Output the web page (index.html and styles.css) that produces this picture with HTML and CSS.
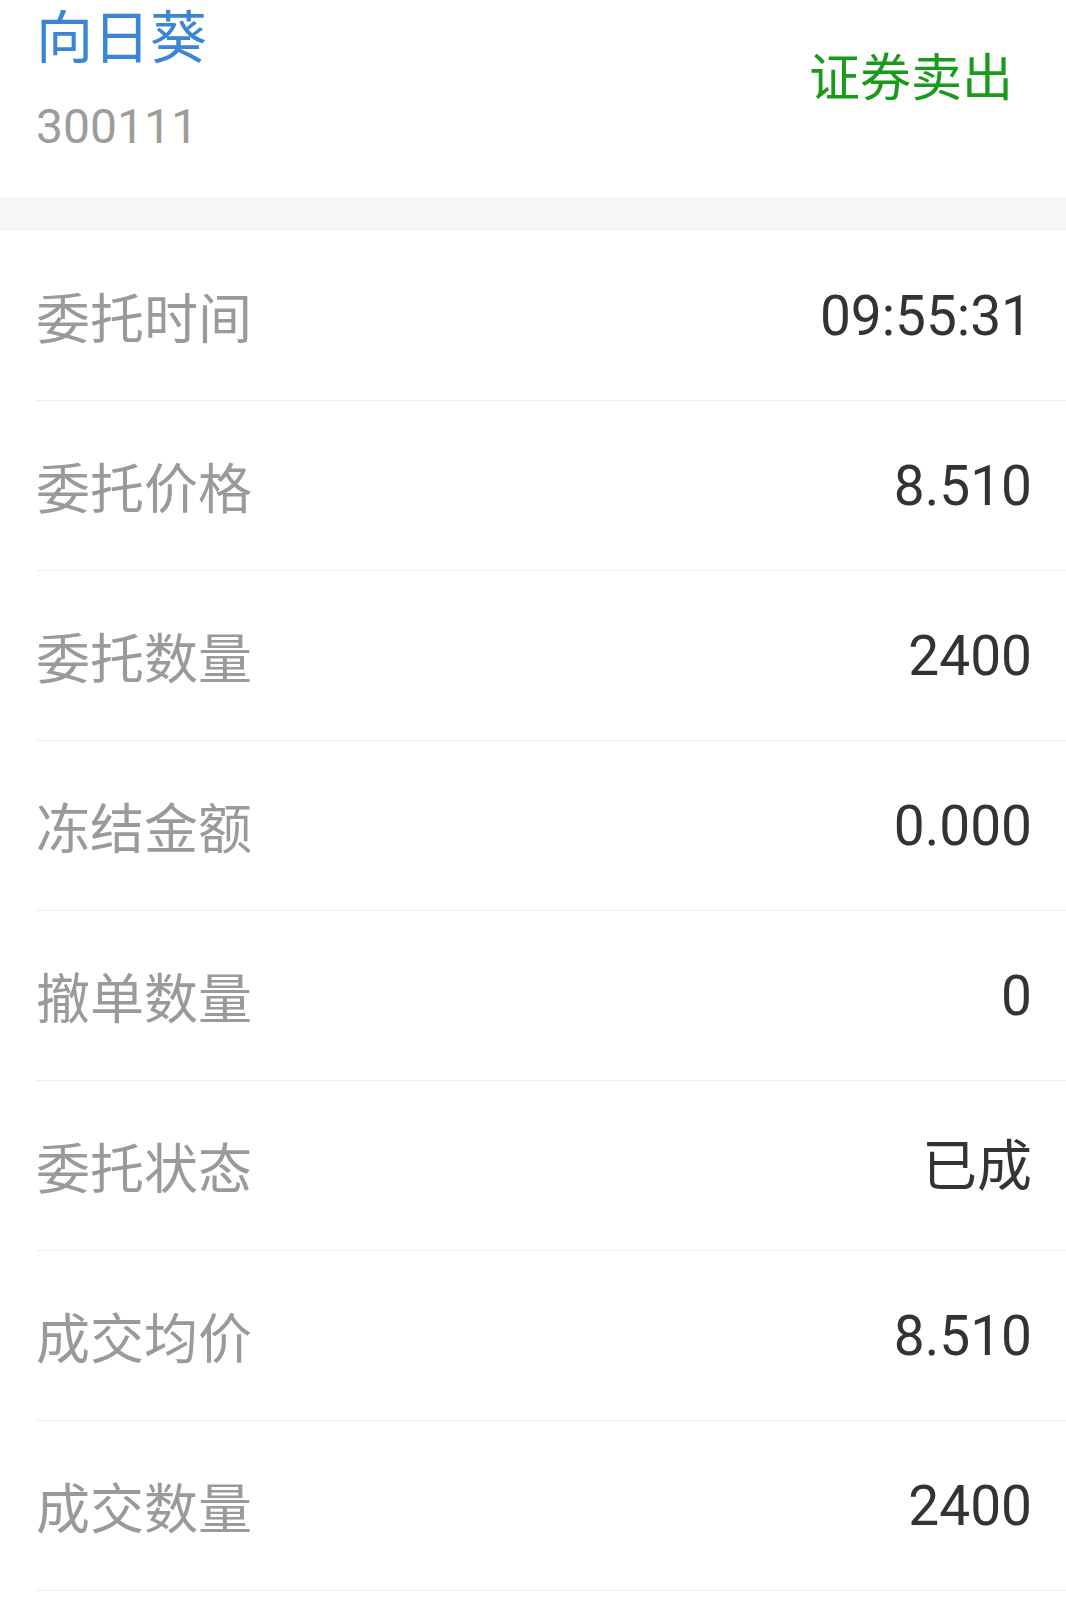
FILE: index.html
```html
<!DOCTYPE html>
<html lang="zh-CN">
<head>
    <meta charset="UTF-8">
    <meta name="viewport" content="width=device-width, initial-scale=1.0">
    <title>委托详情</title>
    <link rel="stylesheet" href="styles.css">
</head>
<body>
    <header class="stock-header">
        <div class="stock-info">
            <div class="stock-name">向日葵</div>
            <div class="stock-code">300111</div>
        </div>
        <div class="order-type">证券卖出</div>
    </header>
    <div class="gap-band"></div>
    <main class="detail-list">
        <div class="detail-row">
            <span class="detail-label">委托时间</span>
            <span class="detail-value">09:55:31</span>
        </div>
        <div class="detail-row">
            <span class="detail-label">委托价格</span>
            <span class="detail-value">8.510</span>
        </div>
        <div class="detail-row">
            <span class="detail-label">委托数量</span>
            <span class="detail-value">2400</span>
        </div>
        <div class="detail-row">
            <span class="detail-label">冻结金额</span>
            <span class="detail-value">0.000</span>
        </div>
        <div class="detail-row">
            <span class="detail-label">撤单数量</span>
            <span class="detail-value">0</span>
        </div>
        <div class="detail-row">
            <span class="detail-label">委托状态</span>
            <span class="detail-value">已成</span>
        </div>
        <div class="detail-row">
            <span class="detail-label">成交均价</span>
            <span class="detail-value">8.510</span>
        </div>
        <div class="detail-row">
            <span class="detail-label">成交数量</span>
            <span class="detail-value">2400</span>
        </div>
    </main>
</body>
</html>
```

FILE: styles.css
```css
body {
    margin: 0;
    padding: 0;
    background-color: #fff;
    font-family: "Noto Sans CJK SC", sans-serif;
}

.stock-header {
    display: flex;
    justify-content: space-between;
    align-items: flex-start;
    padding: 0 53px 42px 36px;
    height: 155px;
}

.stock-name {
    font-size: 57px;
    line-height: 66px;
    color: #3a85d6;
}

.stock-code {
    font-family: Roboto, "Noto Sans CJK SC", sans-serif;
    font-size: 48px;
    line-height: 60px;
    margin-top: 31px;
    color: #9c9c9c;
}

.order-type {
    font-size: 51px;
    line-height: 60px;
    margin-top: 44px;
    color: #1a9a1a;
}

.gap-band {
    height: 34px;
    background-color: #f5f6f8;
}

.detail-row {
    display: flex;
    justify-content: space-between;
    align-items: center;
    height: 169px;
    margin-left: 36px;
    padding-right: 34px;
    border-bottom: 1px solid #ededed;
}

.detail-label {
    font-size: 54px;
    line-height: 60px;
    color: #9a9a9a;
}

.detail-value {
    font-family: Roboto, "Noto Sans CJK SC", sans-serif;
    font-size: 55px;
    line-height: 60px;
    color: #333;
}
```
